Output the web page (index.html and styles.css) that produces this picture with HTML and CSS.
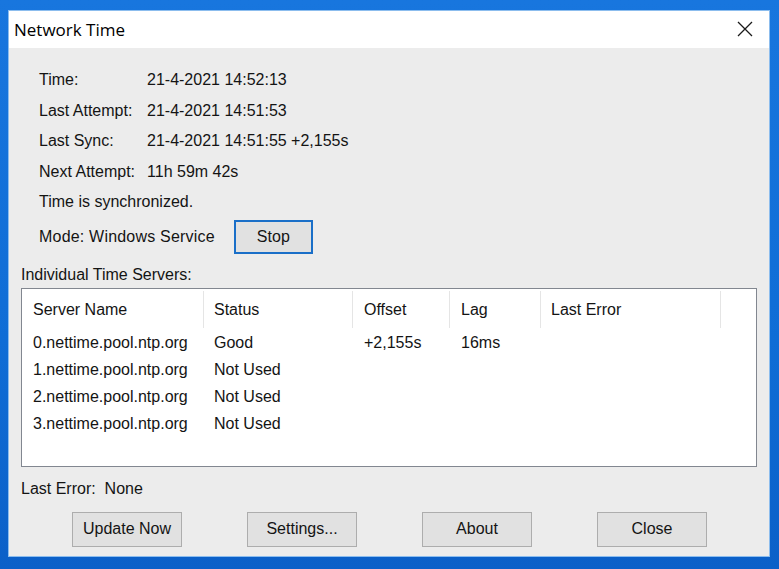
FILE: index.html
```html
<!DOCTYPE html>
<html>
<head>
<meta charset="utf-8">
<link rel="stylesheet" href="styles.css">
</head>
<body>
<div class="window">
  <div class="titlebar">
    <span class="title">Network Time</span>
    <span class="close-x">
      <svg width="16" height="16" viewBox="0 0 16 16"><path d="M1 1 L15 15 M15 1 L1 15" stroke="#1a1a1a" stroke-width="1.3" fill="none"/></svg>
    </span>
  </div>
  <div class="content">
    <div class="info">
      <div class="row"><span class="lbl">Time:</span><span>21-4-2021 14:52:13</span></div>
      <div class="row"><span class="lbl">Last Attempt:</span><span>21-4-2021 14:51:53</span></div>
      <div class="row"><span class="lbl">Last Sync:</span><span>21-4-2021 14:51:55 +2,155s</span></div>
      <div class="row"><span class="lbl">Next Attempt:</span><span>11h 59m 42s</span></div>
      <div class="row">Time is synchronized.</div>
      <div class="mode"><span>Mode: Windows Service</span><button class="btn stop">Stop</button></div>
    </div>
    <div class="section-label">Individual Time Servers:</div>
    <div class="listbox">
      <div class="lhead">
        <div class="hc c1">Server Name</div>
        <div class="hc c2">Status</div>
        <div class="hc c3">Offset</div>
        <div class="hc c4">Lag</div>
        <div class="hc c5">Last Error</div>
      </div>
      <div class="lrow"><div class="dc c1">0.nettime.pool.ntp.org</div><div class="dc c2">Good</div><div class="dc c3">+2,155s</div><div class="dc c4">16ms</div><div class="dc c5"></div></div>
      <div class="lrow"><div class="dc c1">1.nettime.pool.ntp.org</div><div class="dc c2">Not Used</div><div class="dc c3"></div><div class="dc c4"></div><div class="dc c5"></div></div>
      <div class="lrow"><div class="dc c1">2.nettime.pool.ntp.org</div><div class="dc c2">Not Used</div><div class="dc c3"></div><div class="dc c4"></div><div class="dc c5"></div></div>
      <div class="lrow"><div class="dc c1">3.nettime.pool.ntp.org</div><div class="dc c2">Not Used</div><div class="dc c3"></div><div class="dc c4"></div><div class="dc c5"></div></div>
    </div>
    <div class="last-error">Last Error:&nbsp; None</div>
    <div class="buttons">
      <button class="btn big">Update Now</button>
      <button class="btn big">Settings...</button>
      <button class="btn big">About</button>
      <button class="btn big">Close</button>
    </div>
  </div>
</div>
</body>
</html>
```
FILE: styles.css
```css
html, body {
  margin: 0;
  padding: 0;
  height: 100%;
}
body {
  background: linear-gradient(180deg, #1876de 0%, #0f6dd6 60%, #0b60c8 100%);
  overflow: hidden;
  font-family: "Liberation Sans", Arial, sans-serif;
  font-size: 16px;
  color: #141414;
}
.window {
  box-sizing: border-box;
  margin: 10px 0 0 8px;
  width: 762px;
  height: 547px;
  border: 1px solid #8cbdee;
  background: #ececec;
  display: flex;
  flex-direction: column;
}
.titlebar {
  height: 37px;
  background: #ffffff;
  display: flex;
  align-items: center;
  justify-content: space-between;
  padding: 0 16px 0 5px;
  flex: none;
}
.title {
  font-family: "Open Sans", "Noto Sans", sans-serif;
  font-size: 17px;
  color: #000;
  margin-top: -1px;
}
.close-x {
  display: flex;
  width: 16px;
  height: 16px;
  margin-top: -1px;
}
.content {
  padding: 17px 12px 0 12px;
  display: flex;
  flex-direction: column;
}
.info {
  padding-left: 18px;
}
.row {
  height: 30.5px;
  display: flex;
  align-items: center;
}
.lbl {
  display: inline-block;
  min-width: 96px;
  margin-right: 12px;
}
.mode {
  margin-top: 2px;
  height: 34px;
  display: flex;
  align-items: center;
}
.mode span {
  letter-spacing: 0.2px;
}
.btn {
  font-family: "Liberation Sans", Arial, sans-serif;
  font-size: 16px;
  color: #141414;
  background: #e1e1e1;
  border: 1px solid #adadad;
  padding: 0;
  margin: 0;
}
.stop {
  margin-left: 19px;
  width: 79px;
  height: 34px;
  border: 2px solid #1a6fc8;
}
.section-label {
  margin-top: 11px;
  height: 20px;
  line-height: 20px;
}
.listbox {
  margin-top: 3px;
  box-sizing: border-box;
  height: 179px;
  background: #ffffff;
  border: 1px solid #828790;
}
.lhead {
  display: flex;
  height: 40px;
}
.hc {
  box-sizing: border-box;
  height: 37px;
  margin-top: 2px;
  line-height: 37px;
  border-right: 1px solid #e5e5e5;
  padding-left: 11px;
}
.lrow {
  display: flex;
  height: 27px;
  line-height: 27px;
}
.dc {
  box-sizing: border-box;
  padding-left: 11px;
  white-space: nowrap;
}
.c1 { width: 182px; }
.c2 { width: 149px; padding-left: 10px; }
.c3 { width: 97px; }
.c4 { width: 91px; }
.c5 { width: 180px; padding-left: 10px; }
.last-error {
  margin-top: 12px;
  height: 20px;
  line-height: 20px;
}
.buttons {
  margin-top: 13px;
  display: flex;
  gap: 65px;
  padding-left: 51px;
}
.big {
  width: 110px;
  height: 35px;
}
```
